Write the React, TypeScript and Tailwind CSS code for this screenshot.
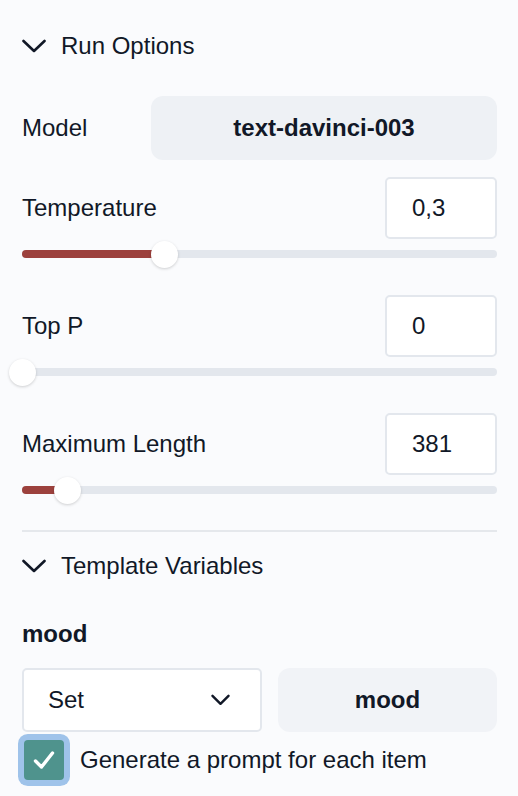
import React from "react";

function Chevron({ className }: { className?: string }) {
  return (
    <svg width="24" height="14" viewBox="0 0 24 14" className={className} fill="none">
      <polyline points="1.5,2 12,12 22.5,2" stroke="#111827" strokeWidth="2.6" strokeLinecap="round" strokeLinejoin="round" />
    </svg>
  );
}

function Slider({ value }: { value: number }) {
  return (
    <div className="relative h-[28px] mt-[1px]">
      <div className="absolute left-0 right-0 top-[10px] h-[8px] rounded-full bg-[#e3e7ed]" />
      <div
        className="absolute left-0 top-[10px] h-[8px] rounded-full bg-[#9c413d]"
        style={{ width: `${value * 100}%` }}
      />
      <div
        className="absolute top-[1px] w-[27px] h-[27px] rounded-full bg-white shadow-[0_1px_3px_rgba(0,0,0,0.18)]"
        style={{ left: `calc(${value * 100}% - 13.5px)` }}
      />
    </div>
  );
}

function ParamRow({ label, value, pos, first }: { label: string; value: string; pos: number; first?: boolean }) {
  return (
    <div className={first ? "mt-[17px]" : "mt-[27px]"}>
      <div className="flex items-center justify-between h-[62px]">
        <span className="text-[24px] text-[#111827]">{label}</span>
        <div className="w-[112px] h-[62px] rounded-[5px] border-2 border-[#e3e7ed] bg-white flex items-center pl-[25px] text-[24px] text-[#111827]">
          {value}
        </div>
      </div>
      <Slider value={pos} />
    </div>
  );
}

export default function App() {
  return (
    <div
      className="min-h-screen bg-[#fafbfd] pl-[22px] pr-[21px] pt-[26px] text-[#111827]"
      style={{ fontFamily: '"Liberation Sans", Arial, sans-serif' }}
    >
      <div className="flex items-center h-[40px] gap-[15px]">
        <Chevron />
        <span className="text-[24px]">Run Options</span>
      </div>

      <div className="flex items-center mt-[30px]">
        <span className="w-[129px] text-[24px]">Model</span>
        <div className="flex-1 h-[64px] rounded-[12px] bg-[#eef1f5] flex items-center justify-center text-[24px] font-bold">
          text-davinci-003
        </div>
      </div>

      <ParamRow label="Temperature" value="0,3" pos={0.3} first />
      <ParamRow label="Top P" value="0" pos={0} />
      <ParamRow label="Maximum Length" value="381" pos={0.095} />

      <div className="mt-[26px] h-[2px] bg-[#e5e8ec]" />

      <div className="flex items-center h-[40px] gap-[15px] mt-[14px]">
        <Chevron />
        <span className="text-[24px]">Template Variables</span>
      </div>

      <div className="mt-[34px] text-[24px] leading-[28px] font-bold">mood</div>

      <div className="flex gap-[16px] mt-[20px]">
        <div className="w-[240px] h-[64px] rounded-[5px] border-2 border-[#e3e7ed] bg-white flex items-center justify-between pl-[24px] pr-[30px] text-[24px]">
          <span>Set</span>
          <svg width="19" height="12" viewBox="0 0 19 12" fill="none">
            <polyline points="1.5,1.8 9.5,9.8 17.5,1.8" stroke="#111827" strokeWidth="2.4" strokeLinecap="round" strokeLinejoin="round" />
          </svg>
        </div>
        <div className="flex-1 h-[64px] rounded-[12px] bg-[#f1f3f7] flex items-center justify-center text-[24px] font-bold">
          mood
        </div>
      </div>

      <div className="flex items-center h-[52px] mt-[2px] gap-[16px]">
        <div className="ml-[2px] w-[40px] h-[40px] rounded-[4px] bg-[#4f938d] ring-[6px] ring-[#9fc3ea] flex items-center justify-center">
          <svg width="24" height="24" viewBox="0 0 24 24" fill="none">
            <polyline points="3.5,13 9.5,19 20.5,5" stroke="white" strokeWidth="3.4" strokeLinecap="round" strokeLinejoin="round" />
          </svg>
        </div>
        <span className="text-[24px]">Generate a prompt for each item</span>
      </div>
    </div>
  );
}
